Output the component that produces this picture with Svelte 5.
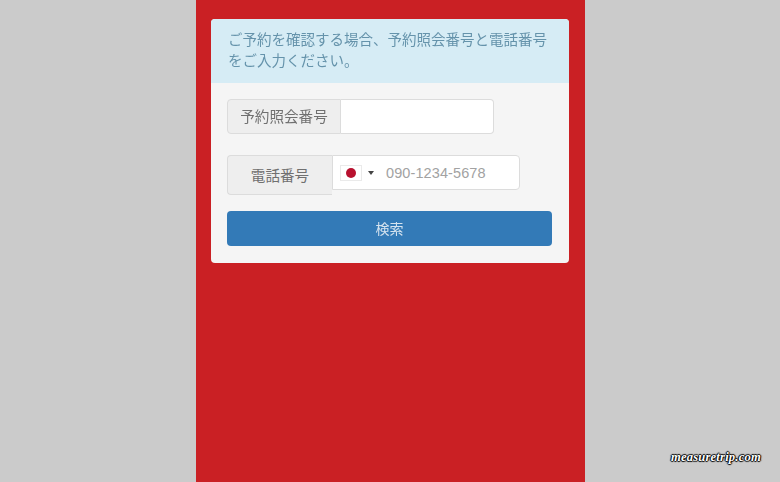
<script lang="ts">
  let code = $state("");
  let phone = $state("");
</script>

<div class="page">
  <main class="strip">
    <section class="panel">
      <header class="panel-heading">ご予約を確認する場合、予約照会番号と電話番号をご入力ください。</header>
      <form class="panel-body" onsubmit={(e) => e.preventDefault()}>
        <div class="group first">
          <span class="addon">予約照会番号</span>
          <input class="code" type="text" bind:value={code} />
        </div>
        <div class="group second">
          <span class="addon tall">電話番号</span>
          <div class="tel">
            <span class="flag"><i class="dot"></i></span>
            <span class="caret"></span>
            <input type="tel" placeholder="090-1234-5678" bind:value={phone} />
          </div>
        </div>
        <button type="submit">検索</button>
      </form>
    </section>
  </main>
  <span class="mark">measuretrip.com</span>
</div>

<style>
  :global(body) {
    margin: 0;
    background: #cbcbcb;
  }

  .page {
    position: relative;
    height: 482px;
    overflow: hidden;
    display: flex;
    justify-content: center;
    font-family: "Liberation Sans", "Noto Sans CJK JP", sans-serif;
  }

  .strip {
    box-sizing: border-box;
    width: 389px;
    margin-left: 1px;
    padding: 19px 16px 0 15px;
    background: #ca2024;
  }

  .panel {
    width: 358px;
    height: 244px;
    background: #f5f5f5;
    border-radius: 4px;
    overflow: hidden;
    filter: blur(0.3px);
  }

  .panel-heading {
    box-sizing: border-box;
    height: 64px;
    padding: 11px 16px 0 17px;
    background: #d6ecf5;
    color: #6593ab;
    font-size: 14.5px;
    line-height: 21px;
  }

  .panel-body {
    padding: 16px 17px 0 16px;
  }

  .group {
    display: flex;
    align-items: flex-start;
  }

  .second {
    margin-top: 21px;
  }

  .addon {
    box-sizing: border-box;
    display: flex;
    align-items: center;
    justify-content: center;
    width: 114px;
    height: 35px;
    padding-bottom: 2px;
    background: #eeeeee;
    border: 1px solid #dcdcdc;
    border-radius: 4px 0 0 4px;
    color: #707070;
    font-size: 14.6px;
  }

  .addon.tall {
    width: 105px;
    height: 40px;
    border-right: 0;
    padding-bottom: 2px;
  }

  input {
    border: 0;
    outline: 0;
    background: transparent;
    font: inherit;
    min-width: 0;
  }

  .code {
    box-sizing: border-box;
    width: 153px;
    height: 35px;
    background: #fff;
    border: 1px solid #dcdcdc;
    border-left: 0;
    border-radius: 0 4px 4px 0;
  }

  .tel {
    box-sizing: border-box;
    display: flex;
    align-items: center;
    width: 188px;
    height: 35px;
    padding-left: 7px;
    background: #fff;
    border: 1px solid #dcdcdc;
    border-radius: 0 4px 4px 0;
  }

  .flag {
    box-sizing: border-box;
    display: flex;
    align-items: center;
    justify-content: center;
    width: 22px;
    height: 16px;
    background: #fff;
    border: 1px solid #eaeaea;
  }

  .dot {
    width: 10px;
    height: 10px;
    border-radius: 50%;
    background: #b8112f;
  }

  .caret {
    width: 0;
    height: 0;
    margin-left: 6px;
    border-left: 3px solid transparent;
    border-right: 3px solid transparent;
    border-top: 4px solid #444;
  }

  .tel input {
    flex: 1;
    margin-left: 12px;
    padding: 0;
    color: #555;
    font-size: 14.5px;
    letter-spacing: 0.1px;
  }

  .tel input::placeholder {
    color: #a2a2a2;
    opacity: 1;
  }

  button {
    display: block;
    width: 325px;
    height: 35px;
    margin-top: 16px;
    padding: 0 0 2px;
    background: #337ab7;
    border: 0;
    border-radius: 4px;
    color: #d5e3ef;
    font: inherit;
    font-size: 14px;
  }

  .mark {
    position: absolute;
    right: 19px;
    top: 450px;
    color: #fff;
    font-family: "Liberation Serif", serif;
    font-size: 12.6px;
    font-weight: bold;
    font-style: italic;
    letter-spacing: 0.2px;
    text-shadow: 1px 0 1px #000, -1px 0 1px #000, 0 1px 1px #000, 0 -1px 1px #000;
  }
</style>
